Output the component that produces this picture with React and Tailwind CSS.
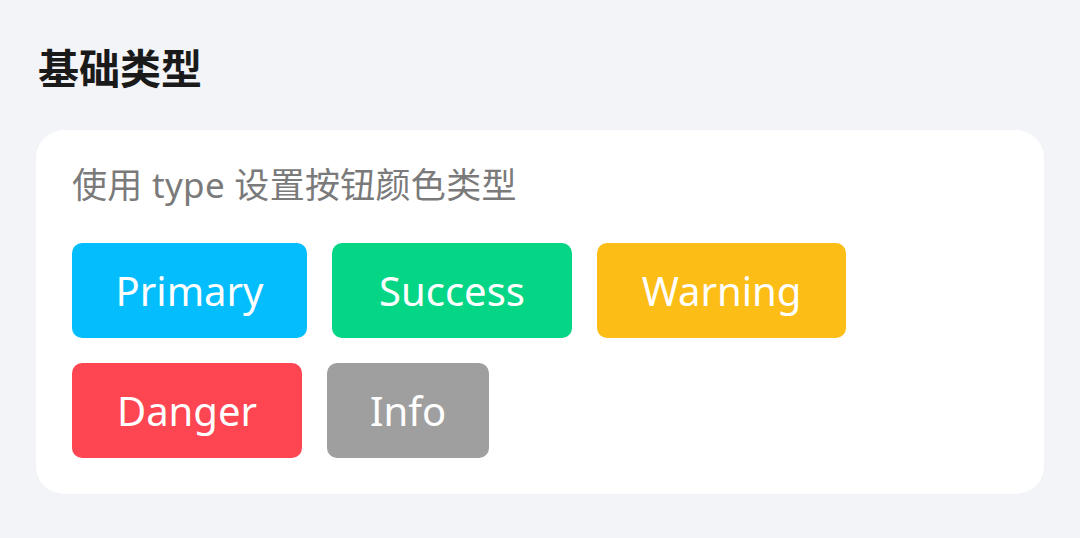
import React from 'react';

const buttons = [
  [
    { label: 'Primary', cls: 'bg-[#04bdfd] w-[235px]' },
    { label: 'Success', cls: 'bg-[#05d686] w-[240px]' },
    { label: 'Warning', cls: 'bg-[#fbbd16] w-[249px]' },
  ],
  [
    { label: 'Danger', cls: 'bg-[#fe4552] w-[230px]' },
    { label: 'Info', cls: 'bg-[#9f9f9f] w-[162px]' },
  ],
];

const App = () => {
  return (
    <div
      className="w-[1080px] h-[538px] bg-[#f3f4f8] px-[36px] pt-[38px]"
      style={{ fontFamily: '"Noto Sans", "Noto Sans CJK SC", sans-serif' }}
    >
      <h1 className="text-[41px] leading-[60px] font-bold text-[#1a1a1a] pl-[2px]">基础类型</h1>
      <div className="mt-[32px] bg-white rounded-[28px] px-[36px] pt-[26px] pb-[36px]">
        <p className="text-[35px] leading-[58px] text-[#7a7a7a] tracking-[0.3px]">使用 type 设置按钮颜色类型</p>
        <div className="mt-[29px] flex flex-col gap-[25px]">
          {buttons.map((row, i) => (
            <div key={i} className="flex gap-[25px]">
              {row.map((b) => (
                <button
                  key={b.label}
                  className={`${b.cls} h-[95px] rounded-[10px] text-white text-[40px] leading-none`}
                >
                  {b.label}
                </button>
              ))}
            </div>
          ))}
        </div>
      </div>
    </div>
  );
};

export default App;
